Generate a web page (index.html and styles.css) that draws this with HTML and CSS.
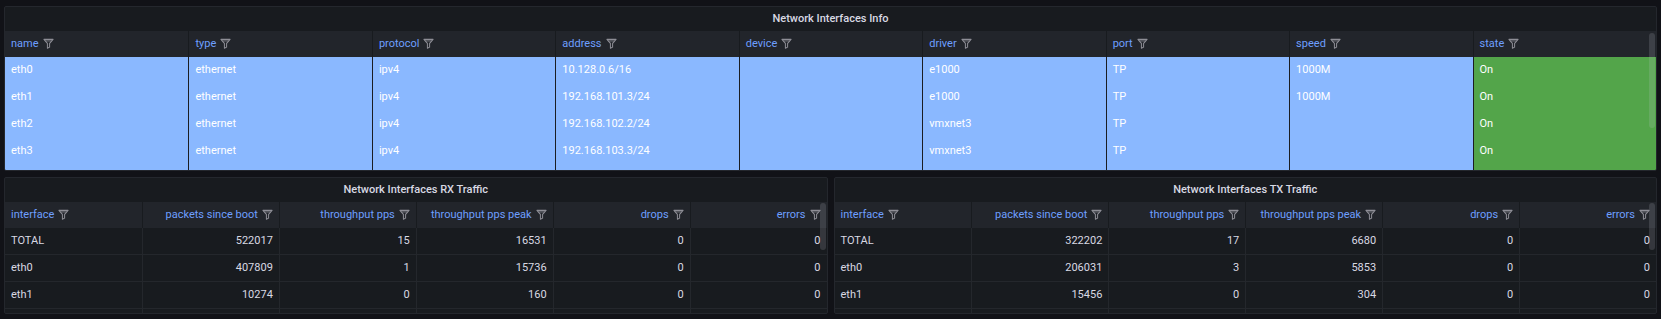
FILE: index.html
```html
<!DOCTYPE html>
<html>
<head>
<meta charset="utf-8">
<link rel="stylesheet" href="styles.css">
</head>
<body>
<svg width="0" height="0" class="defs">
  <symbol id="funnel" viewBox="0 0 12 12">
    <path d="M1 1.5h10L7.2 5.8v4.2L4.8 11.2V5.8z" fill="none" stroke="#8e8e96" stroke-width="1.1" stroke-linejoin="round"/>
    <path d="M2.6 3.2h6.8" stroke="#8e8e96" stroke-width="0.9"/>
  </symbol>
</svg>

<div class="panel panel-info">
  <div class="panel-title">Network Interfaces Info</div>
  <div class="table">
    <div class="thead cols9">
      <div class="th">name<svg class="fi"><use href="#funnel"/></svg></div>
      <div class="th">type<svg class="fi"><use href="#funnel"/></svg></div>
      <div class="th">protocol<svg class="fi"><use href="#funnel"/></svg></div>
      <div class="th">address<svg class="fi"><use href="#funnel"/></svg></div>
      <div class="th">device<svg class="fi"><use href="#funnel"/></svg></div>
      <div class="th">driver<svg class="fi"><use href="#funnel"/></svg></div>
      <div class="th">port<svg class="fi"><use href="#funnel"/></svg></div>
      <div class="th">speed<svg class="fi"><use href="#funnel"/></svg></div>
      <div class="th">state<svg class="fi"><use href="#funnel"/></svg></div>
    </div>
    <div class="tbody tbody-info">
      <div class="tr cols9">
        <div class="td b">eth0</div><div class="td b">ethernet</div><div class="td b">ipv4</div><div class="td b">10.128.0.6/16</div><div class="td b"></div><div class="td b">e1000</div><div class="td b">TP</div><div class="td b">1000M</div><div class="td g">On</div>
      </div>
      <div class="tr cols9">
        <div class="td b">eth1</div><div class="td b">ethernet</div><div class="td b">ipv4</div><div class="td b">192.168.101.3/24</div><div class="td b"></div><div class="td b">e1000</div><div class="td b">TP</div><div class="td b">1000M</div><div class="td g">On</div>
      </div>
      <div class="tr cols9">
        <div class="td b">eth2</div><div class="td b">ethernet</div><div class="td b">ipv4</div><div class="td b">192.168.102.2/24</div><div class="td b"></div><div class="td b">vmxnet3</div><div class="td b">TP</div><div class="td b"></div><div class="td g">On</div>
      </div>
      <div class="tr cols9">
        <div class="td b">eth3</div><div class="td b">ethernet</div><div class="td b">ipv4</div><div class="td b">192.168.103.3/24</div><div class="td b"></div><div class="td b">vmxnet3</div><div class="td b">TP</div><div class="td b"></div><div class="td g">On</div>
      </div>
      <div class="tr cols9">
        <div class="td b"></div><div class="td b"></div><div class="td b"></div><div class="td b"></div><div class="td b"></div><div class="td b"></div><div class="td b"></div><div class="td b"></div><div class="td g"></div>
      </div>
    </div>
    <div class="scrollbar sb-info"></div>
  </div>
</div>

<div class="row-panels">
  <div class="panel panel-traffic">
    <div class="panel-title">Network Interfaces RX Traffic</div>
    <div class="table">
      <div class="thead cols6">
        <div class="th">interface<svg class="fi"><use href="#funnel"/></svg></div>
        <div class="th r">packets since boot<svg class="fi"><use href="#funnel"/></svg></div>
        <div class="th r">throughput pps<svg class="fi"><use href="#funnel"/></svg></div>
        <div class="th r">throughput pps peak<svg class="fi"><use href="#funnel"/></svg></div>
        <div class="th r">drops<svg class="fi"><use href="#funnel"/></svg></div>
        <div class="th r">errors<svg class="fi"><use href="#funnel"/></svg></div>
      </div>
      <div class="tbody tbody-traffic">
        <div class="tr cols6"><div class="td d">TOTAL</div><div class="td d r">522017</div><div class="td d r">15</div><div class="td d r">16531</div><div class="td d r">0</div><div class="td d r">0</div></div>
        <div class="tr cols6"><div class="td d">eth0</div><div class="td d r">407809</div><div class="td d r">1</div><div class="td d r">15736</div><div class="td d r">0</div><div class="td d r">0</div></div>
        <div class="tr cols6"><div class="td d">eth1</div><div class="td d r">10274</div><div class="td d r">0</div><div class="td d r">160</div><div class="td d r">0</div><div class="td d r">0</div></div>
        <div class="tr cols6"><div class="td d"></div><div class="td d r"></div><div class="td d r"></div><div class="td d r"></div><div class="td d r"></div><div class="td d r"></div></div>
      </div>
      <div class="scrollbar sb-traffic"></div>
    </div>
  </div>

  <div class="panel panel-traffic">
    <div class="panel-title">Network Interfaces TX Traffic</div>
    <div class="table">
      <div class="thead cols6">
        <div class="th">interface<svg class="fi"><use href="#funnel"/></svg></div>
        <div class="th r">packets since boot<svg class="fi"><use href="#funnel"/></svg></div>
        <div class="th r">throughput pps<svg class="fi"><use href="#funnel"/></svg></div>
        <div class="th r">throughput pps peak<svg class="fi"><use href="#funnel"/></svg></div>
        <div class="th r">drops<svg class="fi"><use href="#funnel"/></svg></div>
        <div class="th r">errors<svg class="fi"><use href="#funnel"/></svg></div>
      </div>
      <div class="tbody tbody-traffic">
        <div class="tr cols6"><div class="td d">TOTAL</div><div class="td d r">322202</div><div class="td d r">17</div><div class="td d r">6680</div><div class="td d r">0</div><div class="td d r">0</div></div>
        <div class="tr cols6"><div class="td d">eth0</div><div class="td d r">206031</div><div class="td d r">3</div><div class="td d r">5853</div><div class="td d r">0</div><div class="td d r">0</div></div>
        <div class="tr cols6"><div class="td d">eth1</div><div class="td d r">15456</div><div class="td d r">0</div><div class="td d r">304</div><div class="td d r">0</div><div class="td d r">0</div></div>
        <div class="tr cols6"><div class="td d"></div><div class="td d r"></div><div class="td d r"></div><div class="td d r"></div><div class="td d r"></div><div class="td d r"></div></div>
      </div>
      <div class="scrollbar sb-traffic"></div>
    </div>
  </div>
</div>
</body>
</html>
```

FILE: styles.css
```css
html, body {
  margin: 0;
  background: #111217;
}
body {
  padding: 6px 4px 0 4px;
  font-family: Roboto, "Liberation Sans", sans-serif;
  font-size: 11px;
  color: #ccccdc;
  height: 319px;
  box-sizing: border-box;
  overflow: hidden;
}
.defs { position: absolute; }

.panel {
  background: #181b1f;
  border: 1px solid #24272d;
  border-radius: 2px;
  overflow: hidden;
  display: flex;
  flex-direction: column;
}
.panel-title {
  height: 24px;
  box-sizing: border-box;
  padding-bottom: 2px;
  display: flex;
  align-items: center;
  justify-content: center;
  font-weight: 500;
  font-size: 11px;
  color: #d8d9e3;
}
.table {
  position: relative;
}
.cols9 {
  display: grid;
  grid-template-columns: repeat(9, 1fr);
}
.cols6 {
  display: grid;
  grid-template-columns: repeat(6, 1fr);
}
.thead {
  height: 26px;
  background: #22252b;
}
.th {
  display: flex;
  align-items: center;
  padding: 0 6px 1px 6px;
  color: #6e9fff;
  border-left: 1px solid #181b1f;
  gap: 4px;
  white-space: nowrap;
}
.th:first-child { border-left: none; }
.th.r { justify-content: flex-end; }
.fi {
  width: 11px;
  height: 11px;
  flex: none;
}

.tbody { overflow: hidden; }
.tbody-info { height: 113px; }
.tbody-traffic { height: 85px; }

.tr { height: 27px; }
.td {
  display: flex;
  align-items: center;
  padding: 0 6px 2px 6px;
  white-space: nowrap;
  border-left: 1px solid #1c1f24;
}
.td:first-child { border-left: none; }
.td.b {
  background: #8ab8ff;
  color: #ffffff;
  border-left-color: #1b1d22;
}
.td.g {
  background: #53a54a;
  color: #ffffff;
  border-left-color: #1b1d22;
}
.td.d {
  color: #d8d9e3;
  border-left-color: #24272c;
  border-bottom: 1px solid #24272c;
}
.td.r { justify-content: flex-end; }

.row-panels {
  display: flex;
  gap: 6px;
  margin-top: 6px;
}
.row-panels .panel { flex: 1; }

.scrollbar {
  position: absolute;
  right: 1px;
  width: 6px;
  border-radius: 3px;
  background: rgba(204, 204, 220, 0.16);
}
.sb-info { top: 2px; height: 95px; }
.sb-traffic { top: 1px; height: 47px; }
```
